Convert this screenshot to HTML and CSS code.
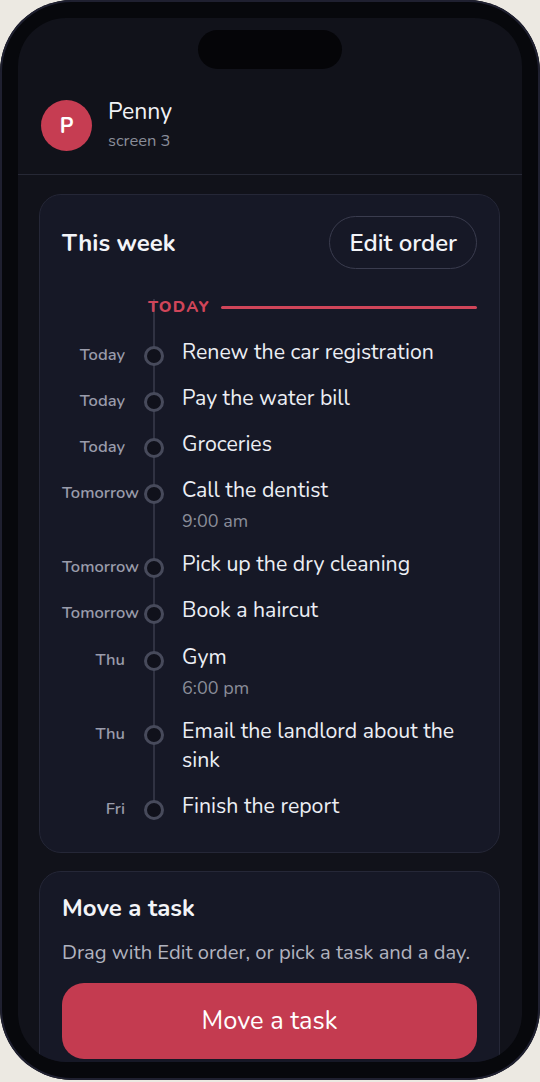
FILE: index.html
```html
<!DOCTYPE html>
<html lang="en">
<head>
<meta charset="utf-8">
<title>This week</title>
<link rel="stylesheet" href="styles.css">
</head>
<body>
<div class="phone">
  <div class="screen">
    <div class="island"></div>
    <header class="header">
      <div class="avatar">P</div>
      <div class="who">
        <div class="name">Penny</div>
        <div class="sub">screen 3</div>
      </div>
    </header>

    <section class="card week">
      <div class="card-head">
        <h2 class="title">This week</h2>
        <button class="ghost-btn">Edit order</button>
      </div>
      <div class="timeline">
        <div class="today-row">
          <span class="today-label">TODAY</span>
          <span class="today-line"></span>
        </div>
        <ul class="rows">
          <li class="row"><span class="day">Today</span><span class="dot"></span><div class="task"><div class="t">Renew the car registration</div></div></li>
          <li class="row"><span class="day">Today</span><span class="dot"></span><div class="task"><div class="t">Pay the water bill</div></div></li>
          <li class="row"><span class="day">Today</span><span class="dot"></span><div class="task"><div class="t">Groceries</div></div></li>
          <li class="row"><span class="day">Tomorrow</span><span class="dot"></span><div class="task"><div class="t">Call the dentist</div><div class="time">9:00 am</div></div></li>
          <li class="row"><span class="day">Tomorrow</span><span class="dot"></span><div class="task"><div class="t">Pick up the dry cleaning</div></div></li>
          <li class="row"><span class="day">Tomorrow</span><span class="dot"></span><div class="task"><div class="t">Book a haircut</div></div></li>
          <li class="row"><span class="day">Thu</span><span class="dot"></span><div class="task"><div class="t">Gym</div><div class="time">6:00 pm</div></div></li>
          <li class="row"><span class="day">Thu</span><span class="dot"></span><div class="task"><div class="t">Email the landlord about the sink</div></div></li>
          <li class="row"><span class="day">Fri</span><span class="dot"></span><div class="task"><div class="t">Finish the report</div></div></li>
        </ul>
      </div>
    </section>

    <section class="card move">
      <h2 class="title">Move a task</h2>
      <p class="desc">Drag with Edit order, or pick a task and a day.</p>
      <button class="primary-btn">Move a task</button>
    </section>
  </div>
</div>
</body>
</html>
```

FILE: styles.css
```css
* { box-sizing: border-box; }
html, body { margin: 0; padding: 0; }
body {
  background: #ece9e2;
  font-family: "Nunito", "Lato", "Noto Sans", sans-serif;
  color: #eceef4;
}
.phone {
  width: 540px;
  height: 1080px;
  border-radius: 72px;
  background: #07080c;
  padding: 18px;
  box-shadow: inset 0 0 0 2px #1f2030;
}
.screen {
  position: relative;
  height: 1044px;
  border-radius: 48px;
  background: #11121a;
  overflow: hidden;
}
.island {
  position: absolute;
  top: 12px;
  left: 180px;
  width: 144px;
  height: 39px;
  border-radius: 20px;
  background: #050508;
}
.header {
  display: flex;
  align-items: center;
  gap: 16px;
  padding: 81px 23px 22px;
  border-bottom: 1px solid #262835;
}
.avatar {
  width: 51px;
  height: 51px;
  border-radius: 50%;
  background: #c63d52;
  color: #fff;
  font-weight: 700;
  font-size: 21px;
  display: flex;
  align-items: center;
  justify-content: center;
}
.who { display: flex; flex-direction: column; }
.name { font-size: 23px; line-height: 30px; color: #f1f2f6; margin-top: -2px; }
.sub { font-size: 16.5px; line-height: 22px; color: #8a8d99; margin-top: 3px; }

.card {
  margin: 19px 22px 0 21px;
  background: #161826;
  border: 1px solid #252737;
  border-radius: 22px;
  padding: 21px 22px 31px;
}
.card-head {
  display: flex;
  align-items: center;
  justify-content: space-between;
}
.title {
  margin: 0;
  font-size: 24px;
  font-weight: 700;
  line-height: 30px;
  color: #f3f4f8;
}
.ghost-btn {
  height: 53px;
  padding: 0 19px;
  border-radius: 27px;
  border: 1px solid #3a3c4e;
  background: transparent;
  color: #f3f4f8;
  font-family: inherit;
  font-size: 24px;
  font-weight: 600;
}
.timeline { position: relative; margin-top: 28px; }
.timeline::before {
  content: "";
  position: absolute;
  left: 91px;
  top: 2px;
  bottom: 14px;
  width: 2px;
  background: #303242;
}
.today-row {
  display: flex;
  align-items: center;
  gap: 11px;
  padding-left: 86px;
  height: 20px;
}
.today-label {
  position: relative;
  color: #d04559;
  font-size: 16px;
  font-weight: 800;
  letter-spacing: 1.3px;
  line-height: 20px;
}
.today-line {
  flex: 1;
  height: 3px;
  border-radius: 2px;
  background: #d04559;
}
.rows {
  list-style: none;
  margin: 21px 0 0;
  padding: 0;
  display: flex;
  flex-direction: column;
  gap: 17.1px;
}
.row {
  display: grid;
  grid-template-columns: 63px 20px 1fr;
  column-gap: 19px;
  align-items: start;
}
.row .task { margin-left: -1px; min-width: 0; }
.day {
  font-size: 16.5px;
  font-weight: 600;
  line-height: 25px;
  padding-top: 4px;
  color: #9a9cab;
  text-align: right;
  white-space: nowrap;
}
.dot {
  position: relative;
  width: 20px;
  height: 20px;
  margin-top: 8px;
  border-radius: 50%;
  border: 3px solid #474a5b;
  background: #10111b;
}
.t {
  font-size: 21.3px;
  line-height: 29px;
  color: #eceef4;
}
.time {
  margin-top: 4px;
  font-size: 18px;
  line-height: 24px;
  color: #8a8d99;
}
.move { margin-top: 18px; padding-top: 21px; }
.desc {
  margin: 16px 0 0;
  font-size: 20.2px;
  line-height: 28px;
  color: #b1b3bf;
}
.primary-btn {
  display: block;
  width: 100%;
  height: 76px;
  margin-top: 16px;
  border: none;
  border-radius: 22px;
  background: #c43b50;
  color: #fff;
  font-family: inherit;
  font-size: 25.4px;
  font-weight: 400;
}
```
